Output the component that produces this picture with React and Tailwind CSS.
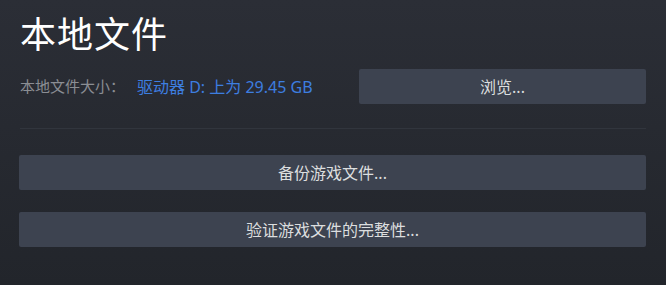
export default function App() {
  const font = { fontFamily: '"Noto Sans", "Noto Sans CJK SC", sans-serif' };
  return (
    <div
      className="w-[666px] h-[285px] overflow-hidden bg-gradient-to-b from-[#2b2e36] to-[#22252b] pl-[19px] pr-[20px] pt-[12px]"
      style={font}
    >
      {/* Title */}
      <h1 className="pl-px text-[36px] leading-[46px] text-white font-normal tracking-[1px]">本地文件</h1>

      {/* Size row */}
      <div className="mt-[11px] flex items-center justify-between h-[35px]">
        <div className="flex items-center pl-px">
          <span className="text-[#8b8e94] text-[15px] w-[117px]">本地文件大小：</span>
          <span className="text-[#3d7ee0] text-[16px]">驱动器 D: 上为 29.45 GB</span>
        </div>
        <button className="w-[287px] h-[35px] rounded-[2px] bg-[#3d4350] text-[16px] text-[#dcdedf]">
          浏览...
        </button>
      </div>

      {/* Divider */}
      <div className="mt-[24px] ml-px h-px bg-[#31353d]" />

      {/* Actions */}
      <div className="mt-[26px] flex flex-col gap-[22px]">
        <button className="w-full h-[35px] rounded-[2px] bg-[#3d4350] text-[16px] text-[#dcdedf]">
          备份游戏文件...
        </button>
        <button className="w-full h-[35px] rounded-[2px] bg-[#3d4350] text-[16px] text-[#dcdedf]">
          验证游戏文件的完整性...
        </button>
      </div>
    </div>
  );
}
